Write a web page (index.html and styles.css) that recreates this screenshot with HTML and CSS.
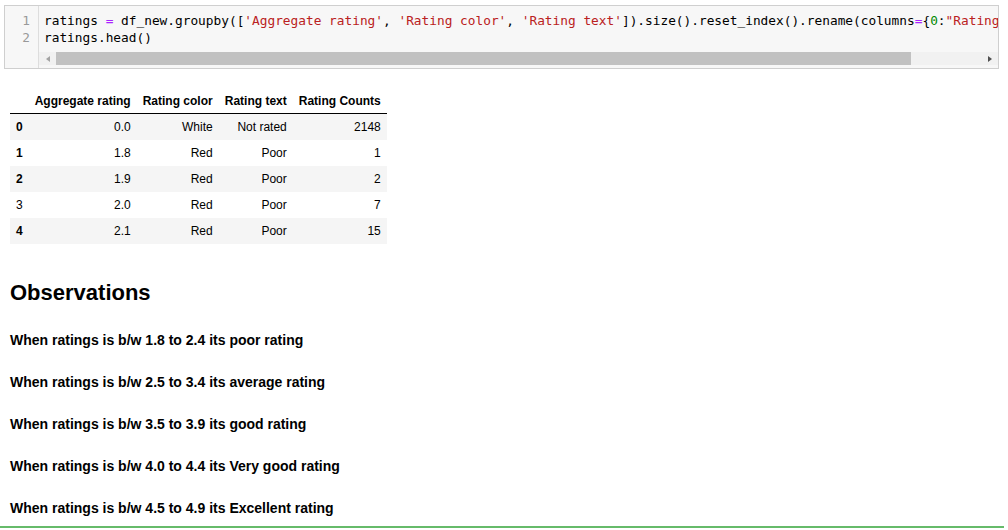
FILE: index.html
```html
<!DOCTYPE html>
<html>
<head>
<meta charset="utf-8">
<link rel="stylesheet" href="styles.css">
</head>
<body>
<div class="code-cell">
  <div class="gutter">
    <div class="ln">1</div>
    <div class="ln">2</div>
  </div>
  <div class="editor">
    <div class="lines">
      <div class="line">ratings <span class="op">=</span> df_new.groupby([<span class="str">'Aggregate rating'</span>, <span class="str">'Rating color'</span>, <span class="str">'Rating text'</span>]).size().reset_index().rename(columns<span class="op">=</span>{<span class="num">0</span>:<span class="str">"Rating Counts"</span>})</div>
      <div class="line">ratings.head()</div>
    </div>
    <div class="hscroll">
      <span class="arrow left"></span>
      <div class="track"><div class="thumb"></div></div>
      <span class="arrow right"></span>
    </div>
  </div>
</div>

<div class="output">
  <table class="df">
    <thead>
      <tr><th></th><th>Aggregate rating</th><th>Rating color</th><th>Rating text</th><th>Rating Counts</th></tr>
    </thead>
    <tbody>
      <tr><th>0</th><td>0.0</td><td>White</td><td>Not rated</td><td>2148</td></tr>
      <tr><th>1</th><td>1.8</td><td>Red</td><td>Poor</td><td>1</td></tr>
      <tr><th>2</th><td>1.9</td><td>Red</td><td>Poor</td><td>2</td></tr>
      <tr><th class="light">3</th><td>2.0</td><td>Red</td><td>Poor</td><td>7</td></tr>
      <tr><th>4</th><td>2.1</td><td>Red</td><td>Poor</td><td>15</td></tr>
    </tbody>
  </table>
</div>

<div class="md">
  <h2>Observations</h2>
  <h4>When ratings is b/w 1.8 to 2.4 its poor rating</h4>
  <h4>When ratings is b/w 2.5 to 3.4 its average rating</h4>
  <h4>When ratings is b/w 3.5 to 3.9 its good rating</h4>
  <h4>When ratings is b/w 4.0 to 4.4 its Very good rating</h4>
  <h4>When ratings is b/w 4.5 to 4.9 its Excellent rating</h4>
</div>

<div class="next-cell"></div>
</body>
</html>
```
FILE: styles.css
```css
html, body {
  margin: 0;
  padding: 0;
  background: #fff;
  font-family: "Liberation Sans", Arial, sans-serif;
  color: #000;
  overflow: hidden;
}

.code-cell {
  display: flex;
  margin: 5px 9px 0 4px;
  height: 62px;
  border: 1px solid #cfcfcf;
  background: #f7f7f7;
  overflow: hidden;
}

.gutter {
  flex: 0 0 25px;
  padding: 6px 8px 0 0;
  border-right: 1px solid #dddddd;
  text-align: right;
  font-family: "DejaVu Sans Mono", "Liberation Mono", monospace;
  font-size: 12.8px;
  line-height: 17px;
  color: #999;
}

.editor {
  flex: 1;
  min-width: 0;
  display: flex;
  flex-direction: column;
}

.lines {
  padding: 6px 0 0 5px;
  height: 40px;
  font-family: "DejaVu Sans Mono", "Liberation Mono", monospace;
  font-size: 12.8px;
  line-height: 17px;
  color: #000;
  overflow: hidden;
}

.line {
  white-space: pre;
}

.op { color: #aa22ff; }
.str { color: #ba2121; }
.num { color: #008800; }

.hscroll {
  display: flex;
  align-items: center;
  height: 13px;
  background: #f1f1f1;
}

.track {
  flex: 1;
  height: 13px;
}

.thumb {
  width: 855px;
  height: 13px;
  background: #c1c1c1;
}

.arrow {
  flex: 0 0 17px;
  height: 13px;
  display: flex;
  align-items: center;
  justify-content: center;
}

.arrow.left::before {
  content: "";
  border-top: 3.5px solid transparent;
  border-bottom: 3.5px solid transparent;
  border-right: 4px solid #a3a3a3;
}

.arrow.right::before {
  content: "";
  border-top: 3.5px solid transparent;
  border-bottom: 3.5px solid transparent;
  border-left: 4px solid #505050;
}

.output {
  padding: 20px 0 0 10px;
}

table.df {
  border-collapse: collapse;
  border: none;
  font-size: 12px;
  color: #000;
}

table.df th,
table.df td {
  padding: 0 6px;
  text-align: right;
  white-space: nowrap;
  line-height: 1;
  vertical-align: middle;
}

table.df thead th {
  height: 24px;
  font-weight: bold;
  border-bottom: 1px solid #000;
}

table.df tbody tr {
  height: 26px;
}

table.df tbody tr:nth-child(odd) {
  background: #f5f5f5;
}

table.df tbody th {
  text-align: left;
  font-weight: bold;
}

table.df tbody th.light {
  font-weight: normal;
}

.md {
  padding: 36px 0 0 10px;
}

.md h2 {
  margin: 0 0 25px 0;
  font-size: 22px;
  line-height: 26px;
  font-weight: bold;
}

.md h4 {
  margin: 0 0 24px 0;
  font-size: 14px;
  line-height: 18px;
  font-weight: bold;
}

.md h4:last-child {
  margin-bottom: 9px;
}

.next-cell {
  margin-right: 4px;
  border-top: 2px solid #66bb6a;
  height: 20px;
}
```
